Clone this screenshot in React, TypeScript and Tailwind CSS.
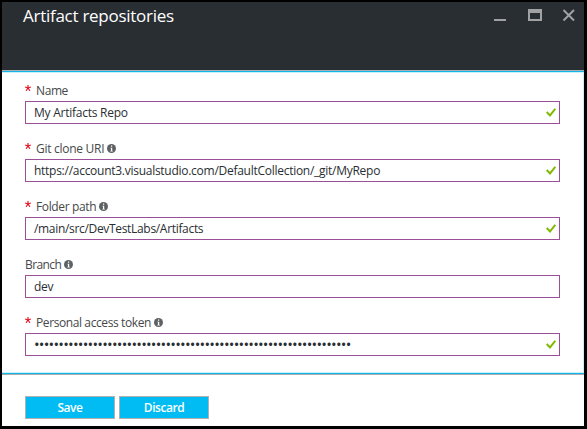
const dots = '•'.repeat(65);

type Field = { label: string; labelClass: string; value: string; valueClass: string; required: boolean; info: boolean; valid: boolean };

const fields: Field[] = [
  { label: 'Name', labelClass: 'tracking-[-0.4px]', value: 'My Artifacts Repo', valueClass: 'tracking-[-0.25px]', required: true, info: false, valid: true },
  { label: 'Git clone URI', labelClass: 'tracking-[-0.28px]', value: 'https://account3.visualstudio.com/DefaultCollection/_git/MyRepo', valueClass: 'tracking-[-0.27px]', required: true, info: true, valid: true },
  { label: 'Folder path', labelClass: 'tracking-[-0.36px]', value: '/main/src/DevTestLabs/Artifacts', valueClass: 'tracking-[-0.32px]', required: true, info: true, valid: true },
  { label: 'Branch', labelClass: 'tracking-[-0.6px]', value: 'dev', valueClass: 'tracking-[-0.25px]', required: false, info: true, valid: false },
  { label: 'Personal access token', labelClass: 'tracking-[-0.4px]', value: dots, valueClass: 'text-[15px] tracking-[-0.77px]', required: true, info: true, valid: true },
];

function InfoIcon() {
  return (
    <svg className="mb-px ml-[3px] h-[9px] w-[9px] shrink-0" viewBox="0 0 9 9">
      <circle cx="4.5" cy="4.5" r="4.5" fill="#5f6264" />
      <path d="M4 1.5h1.2v1.2H4zM3.5 3.7h1.7v3h.6v.8H3.3v-.8H4V4.4h-.5z" fill="#fff" />
    </svg>
  );
}

function Check() {
  return (
    <svg className="mr-[3px] h-[9px] w-[10px] shrink-0" viewBox="0 0 10 9">
      <path d="M.7 4 4 7.4 9.3 .8" fill="none" stroke="#7fba00" strokeWidth="2" />
    </svg>
  );
}

function Star() {
  return (
    <svg className="mr-[5px] mb-[6px] h-[6px] w-[6px] shrink-0" viewBox="0 0 6 6">
      <path d="M3 0v3M.1 2 3 3l2.9-1M1.1 5.8 3 3l1.9 2.8" fill="none" stroke="#e81123" strokeWidth="1.15" />
    </svg>
  );
}

export default function App() {
  return (
    <div className="h-[429px] w-[587px] overflow-hidden bg-black pt-[2px] pr-[3px] pb-[3px] pl-[2px] font-['Open_Sans','Noto_Sans',sans-serif]">
      <div className="flex h-full flex-col bg-white">
        <header className="flex h-[68px] shrink-0 justify-between bg-[#292e32] pl-[21px]">
          <h1 className="h-[28px] text-[17px] leading-[28px] tracking-[-0.27px] whitespace-nowrap text-white">Artifact repositories</h1>
          <svg className="mt-[6px] mr-[7px] h-[14px] w-[83px]" viewBox="0 0 83 14" fill="none" stroke="#a0a2a4">
            <path d="M0 12h12" strokeWidth="2" />
            <path d="M34 1h14v12H34zM36 5v6h10V5z" fill="#a0a2a4" fillRule="evenodd" stroke="none" />
            <path d="m69.5 2 10.5 10.5M80 2 69.5 12.5" strokeWidth="2" />
          </svg>
        </header>
        <div className="h-px shrink-0 bg-[#a9adb0]" />
        <div className="h-px shrink-0 bg-[#13b5ea]" />
        <main className="h-[301px] shrink-0 border-y border-r border-[#c8f1fd] pt-[9px] pl-[23px]">
          {fields.map((f) => (
            <div key={f.label} className="h-[58px] w-[535px]">
              <div className="mb-px flex h-[18px] items-center text-[12px] leading-[18px] text-[#45484a]">
                {f.required && <Star />}
                <span className={'whitespace-nowrap ' + f.labelClass}>{f.label}</span>
                {f.info && <InfoIcon />}
              </div>
              <div className="flex h-[23px] items-center justify-between border border-[#9b4f96] pl-[8px] text-[12px] text-[#292e32]">
                <span className={'leading-[21px] whitespace-nowrap ' + f.valueClass}>{f.value}</span>
                {f.valid && <Check />}
              </div>
            </div>
          ))}
        </main>
        <div className="h-px shrink-0 bg-[#13b5ea]" />
        <div className="h-px shrink-0 bg-[#a9adb0]" />
        <footer className="flex gap-[4px] pt-[21px] pl-[23px] text-[12px] font-semibold tracking-[-0.45px] text-white">
          <button className="h-[23px] w-[90px] border border-[#b0b0b0] bg-[#00bcf2] leading-[21px]">Save</button>
          <button className="h-[23px] w-[90px] border border-[#b0b0b0] bg-[#00bcf2] leading-[21px]">Discard</button>
        </footer>
      </div>
    </div>
  );
}
